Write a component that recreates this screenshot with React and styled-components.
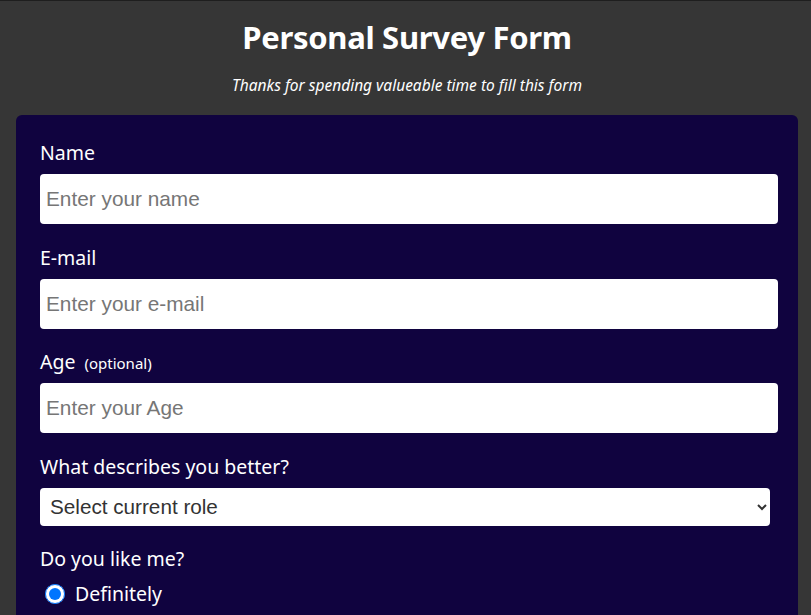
import styled, { createGlobalStyle } from 'styled-components';

const GlobalStyle = createGlobalStyle`
  html, body {
    margin: 0;
    padding: 0;
    background: #363636;
  }
  body {
    border-top: 1px solid #1e1e1e;
    font-family: "Noto Sans", "Open Sans", sans-serif;
    color: #fff;
  }
`;

const Page = styled.main`
  padding: 0 13px 40px 16px;
`;

const Header = styled.header`
  text-align: center;
  padding-top: 15px;
  margin-bottom: 19px;
`;

const Title = styled.h1`
  margin: 0;
  font-size: 31px;
  font-weight: 700;
  letter-spacing: -0.3px;
  line-height: 42px;
`;

const Subtitle = styled.p`
  margin: 17px 0 0;
  font-size: 15.5px;
  font-style: italic;
  line-height: 21px;
`;

const Card = styled.form`
  background: #10033f;
  border-radius: 6px;
  padding: 25px 20px 30px 24px;
`;

const Group = styled.div`
  display: flex;
  flex-direction: column;
  margin-bottom: 20.5px;
`;

const Label = styled.label`
  display: flex;
  align-items: baseline;
  gap: 9px;
  height: 26px;
  margin: 0 0 8px;
  font-size: 19.5px;
  line-height: 26px;
`;

const Note = styled.span`
  font-size: 15px;
  line-height: 26px;
`;

const Input = styled.input`
  box-sizing: border-box;
  width: 100%;
  height: 50px;
  border: none;
  border-radius: 4px;
  padding: 0 6px;
  font-family: "Liberation Sans", Arial, sans-serif;
  font-size: 20.8px;
  color: #333;
  background: #fff;
  &::placeholder {
    color: #767676;
  }
`;

const Select = styled.select`
  box-sizing: border-box;
  width: 730px;
  height: 38px;
  border: none;
  border-radius: 4px;
  padding: 0 6px;
  font-family: "Liberation Sans", Arial, sans-serif;
  font-size: 20.7px;
  color: #333;
  background: #fff;
`;

const RadioRow = styled.label`
  display: flex;
  align-items: center;
  gap: 10px;
  margin: 1px 0 10px;
  padding-left: 5px;
  font-size: 19.5px;
  line-height: 26px;
`;

const Radio = styled.input`
  width: 20px;
  height: 20px;
  margin: 0;
  accent-color: #0075ff;
`;

const fields = [
  { id: 'name', label: 'Name', placeholder: 'Enter your name', type: 'text' },
  { id: 'email', label: 'E-mail', placeholder: 'Enter your e-mail', type: 'email' },
  { id: 'age', label: 'Age', placeholder: 'Enter your Age', type: 'number', note: '(optional)' },
];

const App = () => {
  const fieldList = fields.map(field => (
    <Group key={field.id}>
      <Label htmlFor={field.id}>
        {field.label}
        {field.note && <Note>{field.note}</Note>}
      </Label>
      <Input id={field.id} type={field.type} placeholder={field.placeholder} />
    </Group>
  ));

  return (
    <>
      <GlobalStyle />
      <Page>
        <Header>
          <Title>Personal Survey Form</Title>
          <Subtitle>Thanks for spending valueable time to fill this form</Subtitle>
        </Header>
        <Card onSubmit={e => e.preventDefault()}>
          {fieldList}
          <Group>
            <Label htmlFor="role">What describes you better?</Label>
            <Select id="role" defaultValue="">
              <option value="" disabled>Select current role</option>
              <option value="student">Student</option>
              <option value="job">Full time job</option>
              <option value="learner">Full time learner</option>
              <option value="other">Other</option>
            </Select>
          </Group>
          <Group>
            <Label as="p">Do you like me?</Label>
            <RadioRow>
              <Radio type="radio" name="like" defaultChecked />
              Definitely
            </RadioRow>
            <RadioRow>
              <Radio type="radio" name="like" />
              Maybe
            </RadioRow>
          </Group>
        </Card>
      </Page>
    </>
  );
};

export default App;
